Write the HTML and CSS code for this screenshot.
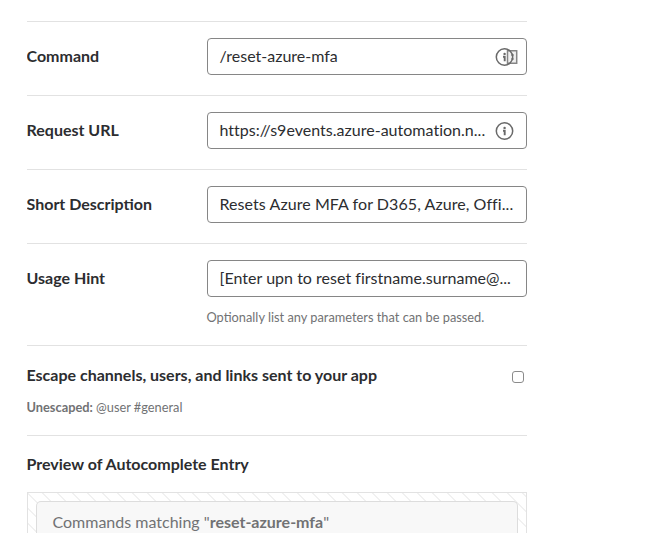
FILE: index.html
```html
<!DOCTYPE html>
<html lang="en">
<head>
<meta charset="utf-8">
<title>Edit Command</title>
<link rel="stylesheet" href="styles.css">
</head>
<body>
<main class="form">
  <div class="row">
    <div class="label">Command</div>
    <div class="field"><span class="value">/reset-azure-mfa</span>
      <svg class="info" viewBox="0 0 24 20"><path d="M12.5 3.7h9.2v12.6h-9.2z" fill="#f0f0f0" stroke="#858585" stroke-width="1.5"/><path d="M16 8h3M16 12h3" fill="none" stroke="#999" stroke-width="1.5"/><circle cx="9.5" cy="10" r="8.2" fill="none" stroke="#696969" stroke-width="1.5"/><circle cx="9.6" cy="6.9" r="1.2" fill="#696969"/><path d="M8 9.8h1.7v4.4" fill="none" stroke="#696969" stroke-width="1.9"/></svg>
    </div>
  </div>
  <div class="row">
    <div class="label">Request URL</div>
    <div class="field"><span class="value url">https://s9events.azure-automation.n...</span>
      <svg class="info" viewBox="0 0 24 20"><circle cx="9.5" cy="10" r="8.2" fill="none" stroke="#696969" stroke-width="1.5"/><circle cx="9.6" cy="6.9" r="1.2" fill="#696969"/><path d="M8 9.8h1.7v4.4" fill="none" stroke="#696969" stroke-width="1.9"/></svg>
    </div>
  </div>
  <div class="row">
    <div class="label">Short Description</div>
    <div class="field"><span class="value summary">Resets Azure MFA for D365, Azure, Offi...</span></div>
  </div>
  <div class="row hinted">
    <div class="label">Usage Hint</div>
    <div class="control">
      <div class="field"><span class="value usage">[Enter upn to reset firstname.surname@...</span></div>
      <p class="hint">Optionally list any parameters that can be passed.</p>
    </div>
  </div>
  <section class="escape">
    <div class="escape-line"><span class="heading">Escape channels, users, and links sent to your app</span><span class="checkbox"></span></div>
    <p class="example"><b>Unescaped:</b> @user #general</p>
  </section>
  <section class="preview">
    <div class="heading">Preview of Autocomplete Entry</div>
    <div class="stage"><div class="card">Commands matching "<b>reset-azure-mfa</b>"</div></div>
  </section>
</main>
</body>
</html>
```

FILE: styles.css
```css
* { box-sizing: border-box; }
body { margin: 0; height: 533px; overflow: hidden; background: #fff; color: #2c2d30; font: 16px/24px Lato, sans-serif; }
p { margin: 0; }
.form { display: flex; flex-direction: column; width: 500px; height: 512px; margin: 21px 0 0 27px; overflow: hidden; }
.row { display: flex; flex: none; justify-content: space-between; height: 74px; padding-top: 16px; border-top: 1px solid #e2e2e2; }
.row.hinted { height: 102px; }
.label, .heading { font-weight: 700; text-indent: -0.5px; }
.label { padding-top: 6px; }
.field { display: flex; align-items: center; justify-content: space-between; width: 320px; height: 37px; padding: 0 7px 0 11.5px; border: 1px solid #868686; border-radius: 4px; white-space: nowrap; }
.value { padding-bottom: 2px; font-variant-ligatures: none; }
.url { letter-spacing: 0.02px; }
.summary { letter-spacing: 0.07px; }
.usage { letter-spacing: 0.025px; }
.info { width: 24px; height: 20px; }
.hint { margin-top: 10px; font-size: 12.8px; line-height: 20px; color: #717274; text-indent: -0.5px; }
.escape { flex: none; height: 90px; padding-top: 17px; border-top: 1px solid #e2e2e2; }
.escape-line { display: flex; justify-content: space-between; align-items: center; }
.checkbox { width: 12px; height: 12px; margin: 3px 3px 0 0; border: 1px solid #8b8b8b; border-radius: 3px; }
.example { margin-top: 10px; font-size: 12.8px; line-height: 20px; color: #717274; text-indent: -0.5px; }
.preview { display: flex; flex: 1; flex-direction: column; min-height: 0; padding-top: 16px; border-top: 1px solid #e2e2e2; }
.stage { flex: 1; min-height: 0; margin-top: 16px; padding: 8px 8px 0; border: 1px solid #e2e2e2; border-bottom: 0; background: linear-gradient(45deg, #fff 20%, #f1f1f1 23% 27%, #fff 30% 70%, #f1f1f1 73% 77%, #fff 80%) -8px 0 / 15px 15px; }
.card { height: 100%; padding: 8px 16px 0 15.5px; border: 1px solid #ddd; border-bottom: 0; border-radius: 5px 5px 0 0; background: #f8f8f8; color: #717274; white-space: nowrap; }
```
